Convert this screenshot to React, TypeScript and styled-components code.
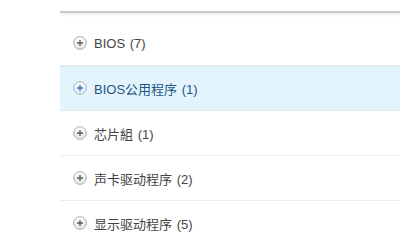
import { createGlobalStyle, styled } from 'styled-components';

const categories = [
  { label: 'BIOS', count: 7 },
  { label: 'BIOS公用程序', count: 1, active: true },
  { label: '芯片組', count: 1 },
  { label: '声卡驱动程序', count: 2 },
  { label: '显示驱动程序', count: 5 },
];

const PlusIcon = ({ active }: { active?: boolean }) => (
  <svg width="14" height="14" viewBox="0 0 14 14">
    <defs>
      <linearGradient id={active ? 'ga' : 'gn'} x1="0" y1="0" x2="0" y2="1">
        <stop offset="0" stopColor="#ffffff" />
        <stop offset="1" stopColor={active ? '#dfe9f2' : '#e6e6e6'} />
      </linearGradient>
    </defs>
    <circle
      cx="7"
      cy="7"
      r="6.3"
      fill={`url(#${active ? 'ga' : 'gn'})`}
      stroke={active ? '#9fb2c4' : '#a9a9a9'}
      strokeWidth="1"
    />
    <path
      d="M7 4V10M4 7H10"
      stroke={active ? '#2a74c2' : '#5c5c5c'}
      strokeWidth="1.4"
    />
  </svg>
);

const App = () => {
  return (
    <>
      <GlobalStyle />
      <Page>
        <Panel>
          <List>
            {categories.map((item) => (
              <Row key={item.label} $active={item.active}>
                <PlusIcon active={item.active} />
                <Label $active={item.active}>
                  {item.label} ({item.count})
                </Label>
              </Row>
            ))}
          </List>
        </Panel>
      </Page>
    </>
  );
};

export default App;

const GlobalStyle = createGlobalStyle`
  html, body {
    margin: 0;
    padding: 0;
    background: #fff;
  }
`;

const Page = styled.div`
  width: 400px;
  height: 240px;
  padding: 11px 0 0 60px;
  box-sizing: border-box;
  overflow: hidden;
`;

const Panel = styled.div`
  border-top: 2px solid #c9c9c9;
  background: linear-gradient(#eeeeee, #ffffff 4px);
  padding-top: 8px;
`;

const List = styled.ul`
  margin: 0;
  padding: 0;
  list-style: none;
`;

const Row = styled.li<{ $active?: boolean }>`
  display: flex;
  align-items: center;
  gap: 7px;

  height: 45px;
  padding-left: 13px;
  box-sizing: border-box;

  background: ${(props) => (props.$active ? '#e3f4fd' : 'transparent')};
  border-bottom: 1px solid ${(props) => (props.$active ? '#dbe8f0' : '#ececec')};
  box-shadow: ${(props) => (props.$active ? 'inset 0 1px 0 #dde9f1' : 'none')};
`;

const Label = styled.span<{ $active?: boolean }>`
  color: ${(props) => (props.$active ? '#1e5486' : '#444444')};
  font-family: 'Liberation Sans', 'Noto Sans CJK SC', sans-serif;
  font-size: 13px;
  word-spacing: 1px;
`;
